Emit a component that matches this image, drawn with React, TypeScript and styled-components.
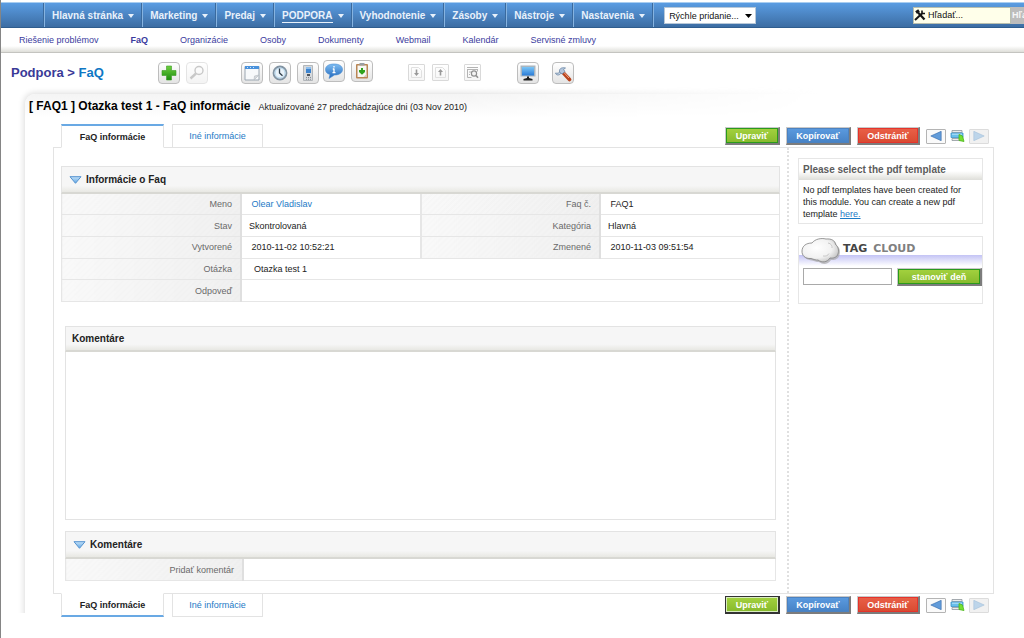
import React from 'react';
import styled, { createGlobalStyle, css } from 'styled-components';

const NB = '\u00a0';

const GlobalStyle = createGlobalStyle`
  *, *::before, *::after { box-sizing: border-box; }
  body {
    margin: 0;
    background: #fff;
    color: #222;
    font: 9px/12px "Liberation Sans", Arial, sans-serif;
  }
  button, input, select { font: inherit; margin: 0; }
  a { color: inherit; text-decoration: none; }
`;

const Page = styled.div`
  min-height: 100vh;
  padding-top: 2px;
  border-left: 1px solid #858585;
  overflow: hidden;
`;

/* ---------- main navigation ---------- */

const NavBar = styled.nav`
  display: flex;
  align-items: stretch;
  height: 26px;
  padding-left: 43px;
  border-top: 1px solid #a9cdf0;
  border-bottom: 1px solid #2f5d8e;
  background: linear-gradient(#5a9ce2, #3c6da3);
`;

const NavItem = styled.a<{ $current?: boolean }>`
  display: flex;
  align-items: center;
  gap: 5px;
  padding: 2px 8px 0 7px;
  border-left: 1px solid #86b3e0;
  box-shadow: -1px 0 #3a6a9e;
  color: #e8f1fb;
  font-size: 10px;
  font-weight: bold;
  white-space: nowrap;
  span { border-bottom: 1px solid ${p => (p.$current ? '#e8f1fb' : 'transparent')}; }
`;

const QuickAdd = styled.div`
  position: relative;
  display: flex;
  align-items: center;
  padding: 1px 0 0 10px;
  border-left: 1px solid #86b3e0;
  box-shadow: -1px 0 #3a6a9e;
  svg { position: absolute; right: 4px; pointer-events: none; }
`;

const QuickSelect = styled.select`
  appearance: none;
  width: 92px;
  height: 17px;
  padding: 0 4px;
  border: 1px solid #b8c8d8;
  border-radius: 0;
  background: #fff;
  color: #111;
`;

const SearchForm = styled.form`
  display: flex;
  align-items: center;
  width: 111px;
  margin-left: auto;
  overflow: hidden;
`;

const SearchBox = styled.label`
  display: flex;
  flex: none;
  align-items: center;
  width: 98px;
  height: 17px;
  border: 1px solid #b9bfae;
  background: #ffffea;
  input {
    width: 80px;
    padding: 0 0 0 2px;
    border: 0;
    background: none;
    color: #111;
    outline: 0;
  }
  input::placeholder { color: #111; }
`;

const SearchButton = styled.button`
  flex: none;
  height: 17px;
  padding: 0 1px;
  border: 0;
  background: #bcbcbc;
  color: #f6f6f6;
  font-weight: bold;
`;

const SubNav = styled.nav`
  display: flex;
  align-items: center;
  gap: 32px;
  height: 25px;
  padding: 0 18px 1px;
  border-bottom: 1px solid #c4c4c0;
  background: linear-gradient(#fff 18px, #deded9);
  color: #3b3b9e;
  white-space: nowrap;
`;

const SubLink = styled.a<{ $current?: boolean }>`
  font-weight: ${p => (p.$current ? 'bold' : 'normal')};
`;

/* ---------- module header ---------- */

const ModuleHeader = styled.header`
  display: flex;
  align-items: center;
  height: 39px;
  padding-left: 10px;
`;

const ModuleTitle = styled.h1`
  width: 147px;
  margin: 0;
  color: #3a3a97;
  font-size: 13px;
  line-height: 16px;
  white-space: nowrap;
  a { color: #0f77c4; }
`;

const ToolGroup = styled.div<{ $before?: number; $gap?: number; $raised?: boolean }>`
  display: flex;
  gap: ${p => p.$gap ?? 6}px;
  margin-left: ${p => p.$before ?? 0}px;
  padding-bottom: ${p => (p.$raised ? 3 : 0)}px;
`;

const ToolButton = styled.button<{ $small?: boolean; $faded?: boolean }>`
  display: grid;
  place-items: center;
  width: ${p => (p.$small ? 17 : 22)}px;
  height: ${p => (p.$small ? 17 : 22)}px;
  padding: 0;
  border: 1px solid ${p => (p.$small ? '#d9d9d9' : '#bdbdbd')};
  border-radius: ${p => (p.$small ? 1 : 4)}px;
  background: linear-gradient(#fff, ${p => (p.$small ? '#f6f6f6' : '#e4e4e4')});
  opacity: ${p => (p.$faded ? 0.4 : 1)};
`;

/* ---------- record frame ---------- */

const Frame = styled.main`
  position: relative;
  margin: 2px 30px 0 24px;
`;

const FrameGlow = styled.div`
  position: absolute;
  z-index: -1;
  inset: -8px 0 4px -8px;
  overflow: hidden;
  mask-image: linear-gradient(to right, #000 45%, transparent 82%);
  &::after {
    content: '';
    position: absolute;
    inset: 8px -20px -20px 8px;
    border-radius: 10px;
    box-shadow: -1px -1px 6px #dcdcdc;
    background: linear-gradient(#f4f4f4, #fff 24px);
  }
`;

const RecordTitle = styled.h2`
  display: flex;
  align-items: baseline;
  gap: 8px;
  margin: 0;
  padding: 4px 0 0 4px;
  color: #000;
  font-size: 12px;
  line-height: 16px;
  white-space: nowrap;
  small { color: #222; font-size: 9px; font-weight: normal; }
`;

const TabRow = styled.div<{ $bottom?: boolean }>`
  position: relative;
  display: flex;
  align-items: ${p => (p.$bottom ? 'flex-start' : 'flex-end')};
  gap: 8px;
  margin: ${p => (p.$bottom ? '-1px 0 0' : '9px 0 -1px')};
  padding: 0 5px 0 36px;
`;

const Tab = styled.a<{ $active?: boolean; $bottom?: boolean }>`
  display: grid;
  place-items: center;
  height: 24px;
  width: ${p => (p.$active ? 103 : 91)}px;
  border: 1px solid #e3e3e3;
  background: #fff;
  color: #1c7ac6;
  ${p =>
    p.$active &&
    css`
      color: #222;
      font-weight: bold;
      border-${p.$bottom ? 'bottom' : 'top'}: 2px solid #69a9e4;
      border-${p.$bottom ? 'top' : 'bottom'}-color: #fff;
    `}
`;

const Actions = styled.div`
  display: flex;
  align-items: center;
  gap: 6px;
  height: 24px;
  margin-left: auto;
`;

const tones = {
  green: ['#a4d23f', '#86b92c', '#2a9a1c'],
  blue: ['#5b9be0', '#4681c4', '#4c82c0'],
  red: ['#ea6048', '#d84a30', '#e4342c'],
};

const ActionButton = styled.button<{ $tone: keyof typeof tones; $focused?: boolean; $width: number }>`
  width: ${p => p.$width}px;
  height: 18px;
  padding: 0;
  border: 1px solid #c9c9c9;
  border-width: 1px 2px 2px 1px;
  border-right-color: #7c7c7c;
  border-bottom-color: #7c7c7c;
  box-shadow: inset 0 0 0 1px ${p => tones[p.$tone][2]};
  background: linear-gradient(${p => tones[p.$tone][0]}, ${p => tones[p.$tone][1]});
  color: #fff;
  font-weight: bold;
  line-height: 12px;
  ${p =>
    p.$focused &&
    css`
      border-color: #333;
      box-shadow: inset 0 0 0 1px #d9ecc0;
    `}
`;

const Pager = styled.div`
  display: flex;
  align-items: center;
  gap: 4px;
`;

const PagerButton = styled.button<{ $off?: boolean }>`
  display: grid;
  place-items: center;
  width: 20px;
  height: 15px;
  padding: 0;
  border: 1px solid ${p => (p.$off ? '#dcdcdc' : '#b4b4b4')};
  border-radius: 1px;
  background: ${p => (p.$off ? '#f1f1f1' : '#fafafa')};
`;

const PlainButton = styled.button`
  display: grid;
  width: 15px;
  padding: 0;
  border: 0;
  background: none;
`;

const Panel = styled.div`
  display: flex;
  margin-left: 28px;
  border: 1px solid #e3e3e3;
`;

const MainColumn = styled.div`
  flex: 1;
  min-width: 0;
  padding: 18px 7px 12px;
`;

const Inset = styled.div`
  margin: 24px 4px 0;
`;

const Sidebar = styled.aside`
  flex: none;
  width: 206px;
  padding: 10px 10px 10px 9px;
  border-left: 2px dotted #e0e0e0;
`;

/* ---------- blocks ---------- */

const BlockHead = styled.h3<{ $tall?: boolean; $indent: number }>`
  display: flex;
  align-items: center;
  gap: 4px;
  height: ${p => (p.$tall ? 28 : 26)}px;
  margin: 0;
  padding: 0 ${p => p.$indent}px;
  border: 1px solid #e3e3e3;
  border-bottom: 2px solid #d8d8d3;
  background: linear-gradient(#f6f6f6 75%, #e8e8e3);
  color: #222;
  font-size: 10px;
  line-height: 12px;
`;

const Fields = styled.table<{ $height: number }>`
  width: 100%;
  height: ${p => p.$height}px;
  border-collapse: collapse;
  table-layout: fixed;
  th, td {
    padding: 0 8px 0 7px;
    border: 1px solid #e6e6e6;
    color: #222;
    line-height: 12px;
    text-align: left;
    overflow: hidden;
  }
  th {
    border-right: 2px solid #dfdfdf;
    background:
      repeating-linear-gradient(135deg, transparent 0 2px, rgba(0, 0, 0, .008) 2px 4px),
      linear-gradient(to right, #f9f9f9, #f0f0f0);
    color: #6a6a6a;
    font-weight: normal;
    text-align: right;
  }
  tr:first-child > * { border-top: 0; }
  td + th { border-left: 2px solid #e6e6e6; }
  a { color: #1c7ac6; }
`;

const Comments = styled.div`
  min-height: 168px;
  margin-bottom: 11px;
  border: 1px solid #e3e3e3;
  border-top: 0;
`;

const CommentInput = styled.input`
  display: block;
  width: 100%;
  padding: 0;
  border: 0;
  outline: 0;
`;

/* ---------- sidebar cards ---------- */

const Card = styled.section`
  margin-bottom: 12px;
  border: 1px solid #e6e6e6;
`;

const CardHead = styled.h3`
  margin: 0;
  padding: 5px 4px 3px;
  border-bottom: 1px solid #e0e0dc;
  background: linear-gradient(#fff 60%, #e2e2dd);
  color: #5c5c5c;
  font-size: 10px;
  line-height: 12px;
`;

const CardText = styled.p`
  margin: 0;
  padding: 4px 16px 3px 4px;
  a { color: #1c7ac6; text-decoration: underline; }
`;

const CloudHead = styled.div`
  display: flex;
  gap: 2px;
  height: 29px;
  padding-left: 2px;
  background: linear-gradient(#fff 18px, #c3c3f5 18px, #fff);
  h3 {
    display: flex;
    gap: 6px;
    margin: 0;
    padding-top: 5px;
    color: #444;
    font: bold 11px/13px "DejaVu Sans", sans-serif;
  }
  span { color: #808080; }
`;

const TagForm = styled.form`
  display: flex;
  gap: 5px;
  padding: 2px 0 17px 4px;
  input {
    flex: 1;
    min-width: 0;
    height: 17px;
    border: 1px solid #a9a9a9;
    outline: 0;
  }
`;

/* ---------- drawings ---------- */

const Caret = () => (
  <svg width="6" height="4" viewBox="0 0 6 4" aria-hidden="true"><path d="M0 0h6L3 4z" fill="#e8f1fb" /></svg>
);

const SelectCaret = () => (
  <svg width="7" height="4" viewBox="0 0 7 4" aria-hidden="true"><path d="M0 0h7L3.500 4z" fill="#000" /></svg>
);

const Tools = () => (
  <svg width="12" height="13" viewBox="0 0 12 13" fill="none" stroke="#151515" aria-hidden="true">
    <path d="M2 3.500L5 1.500" strokeWidth="3" />
    <path d="M4 3.500L10.500 10.500" strokeWidth="2.200" />
    <path d="M1 11L8 4.500" strokeWidth="2" />
    <path d="M8 1.500v3h3" strokeWidth="1.600" />
  </svg>
);

const Collapse = () => (
  <svg width="13" height="8" viewBox="0 0 13 8" aria-hidden="true">
    <defs>
      <linearGradient id="fold" x2="0" y2="1"><stop stopColor="#c4e2f8" /><stop offset="1" stopColor="#5fa5e4" /></linearGradient>
    </defs>
    <path d="M1 .7h11L6.500 7.300z" fill="url(#fold)" stroke="#5492cf" strokeLinejoin="round" />
  </svg>
);

const PlusIcon = () => (
  <svg width="18" height="18" viewBox="0 0 18 18" aria-hidden="true">
    <defs><linearGradient id="plus" x2="0" y2="1"><stop stopColor="#6fd03f" /><stop offset="1" stopColor="#1c8c10" /></linearGradient></defs>
    <path d="M6.500 2h5v4.500H16v5h-4.500V16h-5v-4.500H2v-5h4.500z" fill="url(#plus)" stroke="#3c9c25" strokeWidth=".6" />
  </svg>
);

const LensIcon = () => (
  <svg width="18" height="18" viewBox="0 0 18 18" fill="none" stroke="#777" aria-hidden="true">
    <circle cx="11" cy="6.500" r="4" strokeWidth="1.400" /><path d="M8 9.500L2.500 14.500" strokeWidth="2.400" />
  </svg>
);

const CalendarIcon = () => (
  <svg width="18" height="18" viewBox="0 0 18 18" aria-hidden="true">
    <path d="M2 2.500h14v13.500H2z" fill="#f7f9fb" stroke="#9aa5b0" />
    <path d="M2 2h14v3H2z" fill="#4a92dc" /><path d="M4 3.500h1M7 3.500h1M10 3.500h1" stroke="#cfe4f8" />
    <path d="M16 11l-4.500 1-.5 4z" fill="#d5d9de" stroke="#b4bac0" strokeWidth=".6" />
  </svg>
);

const ClockIcon = () => (
  <svg width="18" height="18" viewBox="0 0 18 18" aria-hidden="true">
    <circle cx="9" cy="9" r="6.500" fill="#e9f3fa" stroke="#8193a2" strokeWidth="1.800" />
    <circle cx="9" cy="9" r="5" fill="none" stroke="#b3d5ec" />
    <path d="M8.500 4.500V9l3 2.800" fill="none" stroke="#2f3e4a" strokeWidth="1.300" />
  </svg>
);

const DeviceIcon = () => (
  <svg width="18" height="18" viewBox="0 0 18 18" aria-hidden="true">
    <path d="M4.500 1.500h9v15h-9z" fill="#d6d9dc" stroke="#b2b6ba" />
    <path d="M7 3h5v6H7z" fill="#3d84cf" /><path d="M7 3h5v2H7z" fill="#8ebfee" />
    <path d="M8 10h3v2H8z" fill="#50555b" /><path d="M7 13.500h1M9 13.500h1M11 13.500h1M7 15.300h1M9 15.300h1M11 15.300h1" stroke="#8b9096" />
  </svg>
);

const ChatIcon = () => (
  <svg width="20" height="18" viewBox="0 0 20 18" aria-hidden="true">
    <defs><linearGradient id="chat" x2="0" y2="1"><stop stopColor="#7fbdf2" /><stop offset="1" stopColor="#2067bb" /></linearGradient></defs>
    <path d="M10 2c5 0 8.500 2 8.500 5.500S15 13 10.500 13L5 16.500l1-4C3 11.700 1.500 10 1.500 7.500 1.500 4 5 2 10 2z" fill="url(#chat)" stroke="#4a8cd0" strokeWidth=".6" />
    <path d="M10 4v1.500M10 6.500V11M8.800 7H10M8.500 10.700h3" stroke="#fff" strokeWidth="1.300" />
  </svg>
);

const ClipboardIcon = () => (
  <svg width="18" height="18" viewBox="0 0 18 18" aria-hidden="true">
    <rect x="3" y="2" width="12" height="14.500" rx="1" fill="#b98655" />
    <path d="M4.500 3.500h9v11.500h-9z" fill="#f7f7f3" /><path d="M6.500 1h5v2.500h-5z" fill="#9b9fa3" />
    <path d="M8 6h2v2h2v2l-3 2.800L6 10V8h2z" fill="#2fa31e" /><path d="M13.500 12l-3 3h3z" fill="#d3cec4" />
  </svg>
);

const TransferIcon = ({ up }: { up?: boolean }) => (
  <svg width="13" height="13" viewBox="0 0 13 13" fill="none" stroke="#e0e0e0" aria-hidden="true">
    <path d="M1.500 1.500h7l3 3v7h-10z" />
    <path d={up ? 'M6.500 3L9 6H7.300v3.500H5.700V6H4z' : 'M6.500 10L9 7H7.300V3.500H5.700V7H4z'} fill="#999" stroke="none" />
  </svg>
);

const FindIcon = () => (
  <svg width="15" height="15" viewBox="0 0 15 15" fill="none" stroke="#b4b4b4" aria-hidden="true">
    <path d="M2 2.500h11M2 4.500h11" /><path d="M2.500 4.500v8h4M12.500 4.500v2" />
    <path d="M4 7h2M4 9.500h1" /><circle cx="9" cy="8.500" r="2.600" fill="#f4f4f4" stroke="#909090" strokeWidth="1.200" /><path d="M11 10.500l2 2.300" stroke="#909090" strokeWidth="1.600" />
  </svg>
);

const MonitorIcon = () => (
  <svg width="18" height="18" viewBox="0 0 18 18" aria-hidden="true">
    <defs><linearGradient id="screen" x2="0" y2="1"><stop stopColor="#7cc6f7" /><stop offset="1" stopColor="#2a7bd6" /></linearGradient></defs>
    <path d="M1.500 1.500h15v11h-15z" fill="#aab6c0" /><path d="M3 3h12v8.500H3z" fill="url(#screen)" />
    <path d="M8 12.500h2v1.500l3.500 1v1.500h-9V15L8 14z" fill="#1e1e1e" />
  </svg>
);

const HammerIcon = () => (
  <svg width="18" height="18" viewBox="0 0 18 18" fill="none" aria-hidden="true">
    <path d="M8.500 8l7 7.500" stroke="#b8431c" strokeWidth="3.600" strokeLinecap="round" />
    <path d="M9.500 8l5.500 6" stroke="#f0a184" strokeWidth="1" />
    <path d="M6.500 7.500C4.500 9.500 3.500 9.500 1.500 9c.5 2.500 4 3 6-.5" fill="#c5d3e4" stroke="#6b86a6" strokeWidth=".8" />
    <path d="M5.500 8C5 5 7 3 11.500 4L9.500 5.500 11 7.500 8 10z" fill="#b4c6dc" stroke="#6b86a6" strokeWidth=".8" />
  </svg>
);

const Arrow = ({ right }: { right?: boolean }) => (
  <svg width="12" height="10" viewBox="0 0 12 10" aria-hidden="true">
    {right
      ? <path d="M.8.300L11.200 5 .8 9.700z" fill="#bdd5ea" stroke="#a5c1da" strokeWidth=".6" />
      : <path d="M11.200.300L.8 5l10.400 4.700z" fill="#629cda" stroke="#3468a8" strokeWidth=".6" />}
  </svg>
);

const JumpIcon = () => (
  <svg width="15" height="14" viewBox="0 0 15 14" aria-hidden="true">
    <path d="M2 1.500h10v2H2zM2 9.500h10v2H2z" fill="#ececec" stroke="#8f979d" strokeWidth=".8" />
    <path d="M1 4h12v4.500H1z" fill="#69bfec" stroke="#3b93c8" strokeWidth=".8" /><path d="M2 5.200h10" stroke="#b8e4fa" />
    <path d="M9 5.500l3.500 1.500 1.500 5.500-5-1z" fill="#76e032" stroke="#4ab51b" strokeWidth=".8" />
  </svg>
);

const CloudIcon = () => (
  <svg width="40" height="28" viewBox="0 0 40 28" aria-hidden="true">
    <defs>
      <radialGradient id="puff" cx=".4" cy=".4" r=".7"><stop stopColor="#fff" /><stop offset=".6" stopColor="#f2f2f2" /><stop offset="1" stopColor="#bdbdbd" /></radialGradient>
    </defs>
    <path d="M10 22.500C4 22 .8 18.500 1 13.500 1.200 9 5 6 11 5.500 14 2 20 .8 25 2c5.500-.5 9 1.500 10 5.500 3 2.500 3.500 6 2.500 9.500-1 4-5 5.500-8.500 5-3 4.500-8 5-12 2-2 .2-4-.5-7-1.500z" fill="#aaa" opacity=".7" transform="translate(1 1)" />
    <path d="M10 21.500C4 22 .8 18.500 1 14 1.200 9 5 6 11 6 14 2 20 .8 25 2c5.500-.5 9 1.500 9.500 5.500 3 2.500 3.500 6 2.500 9.500-1 3.500-5 4.500-8 4-3 4.500-8 5-12 2-2 .2-4-.5-7-1.500z" fill="url(#puff)" stroke="#808080" strokeWidth=".8" />
    <path d="M27 6c3 .5 4.500 2.500 4 5M22 19c3 .5 5-.5 6-2.500" fill="none" stroke="#c8c8c8" />
  </svg>
);

/* ---------- composition ---------- */

const modules = ['Hlavná stránka', 'Marketing', 'Predaj', 'PODPORA', 'Vyhodnotenie', 'Zásoby', 'Nástroje', 'Nastavenia'];
const sections = ['Riešenie problémov', 'FaQ', 'Organizácie', 'Osoby', 'Dokumenty', 'Webmail', 'Kalendár', 'Servisné zmluvy'];

function RecordBar({ bottom }: { bottom?: boolean }) {
  return (
    <TabRow $bottom={bottom}>
      <Tab href="#info" $active $bottom={bottom}>FaQ informácie</Tab>
      <Tab href="#more" $bottom={bottom}>Iné informácie</Tab>
      <Actions>
        <ActionButton type="button" $tone="green" $width={55} $focused={bottom}>Upraviť</ActionButton>
        <ActionButton type="button" $tone="blue" $width={65}>Kopírovať</ActionButton>
        <ActionButton type="button" $tone="red" $width={63}>Odstrániť</ActionButton>
        <Pager>
          <PagerButton type="button" aria-label="Predchádzajúci"><Arrow /></PagerButton>
          <PlainButton type="button" aria-label="Prejsť na"><JumpIcon /></PlainButton>
          <PagerButton type="button" aria-label="Nasledujúci" $off><Arrow right /></PagerButton>
        </Pager>
      </Actions>
    </TabRow>
  );
}

export default function App() {
  return (
    <Page>
      <GlobalStyle />
      <NavBar>
        {modules.map(name => (
          <NavItem key={name} href="#" $current={name === 'PODPORA'}><span>{name}</span><Caret /></NavItem>
        ))}
        <QuickAdd>
          <QuickSelect aria-label="Rýchle pridanie"><option>Rýchle pridanie...</option></QuickSelect>
          <SelectCaret />
        </QuickAdd>
        <SearchForm>
          <SearchBox><Tools /><input placeholder="Hľadať..." aria-label="Hľadať" /></SearchBox>
          <SearchButton type="button">Hľadať</SearchButton>
        </SearchForm>
      </NavBar>
      <SubNav>
        {sections.map(name => (
          <SubLink key={name} href="#" $current={name === 'FaQ'}>{name}</SubLink>
        ))}
      </SubNav>

      <ModuleHeader>
        <ModuleTitle>Podpora &gt; <a href="#">FaQ</a></ModuleTitle>
        <ToolGroup>
          <ToolButton type="button" aria-label="Pridať"><PlusIcon /></ToolButton>
          <ToolButton type="button" aria-label="Vyhľadať" $faded><LensIcon /></ToolButton>
        </ToolGroup>
        <ToolGroup $before={33}>
          <ToolButton type="button" aria-label="Kalendár"><CalendarIcon /></ToolButton>
          <ToolButton type="button" aria-label="Hodiny"><ClockIcon /></ToolButton>
          <ToolButton type="button" aria-label="Kalkulačka"><DeviceIcon /></ToolButton>
        </ToolGroup>
        <ToolGroup $before={4} $raised>
          <ToolButton type="button" aria-label="Chat"><ChatIcon /></ToolButton>
          <ToolButton type="button" aria-label="Posledné"><ClipboardIcon /></ToolButton>
        </ToolGroup>
        <ToolGroup $before={35} $gap={7}>
          <ToolButton type="button" aria-label="Import" $small><TransferIcon /></ToolButton>
          <ToolButton type="button" aria-label="Export" $small><TransferIcon up /></ToolButton>
        </ToolGroup>
        <ToolGroup $before={15}>
          <ToolButton type="button" aria-label="Duplicity" $small><FindIcon /></ToolButton>
        </ToolGroup>
        <ToolGroup $before={36} $gap={13}>
          <ToolButton type="button" aria-label="Monitor"><MonitorIcon /></ToolButton>
          <ToolButton type="button" aria-label="Nastavenia"><HammerIcon /></ToolButton>
        </ToolGroup>
      </ModuleHeader>

      <Frame>
        <FrameGlow />
        <RecordTitle>
          [ FAQ1 ] Otazka test 1 - FaQ informácie
          <small>Aktualizované 27 predchádzajúce dni (03 Nov 2010)</small>
        </RecordTitle>
        <RecordBar />
        <Panel>
          <MainColumn>
            <BlockHead $tall $indent={7}><Collapse />Informácie o Faq</BlockHead>
            <Fields $height={108}>
              <tbody>
                <tr>
                  <th scope="row">Meno</th><td>{NB}<a href="#">Olear Vladislav</a></td>
                  <th scope="row">Faq č.</th><td>{NB}FAQ1</td>
                </tr>
                <tr>
                  <th scope="row">Stav</th><td>Skontrolovaná</td>
                  <th scope="row">Kategória</th><td>Hlavná</td>
                </tr>
                <tr>
                  <th scope="row">Vytvorené</th><td>{NB}2010-11-02 10:52:21</td>
                  <th scope="row">Zmenené</th><td>{NB}2010-11-03 09:51:54</td>
                </tr>
                <tr><th scope="row">Otázka</th><td colSpan={3}>{NB}{NB}Otazka test 1</td></tr>
                <tr><th scope="row">Odpoveď</th><td colSpan={3} /></tr>
              </tbody>
            </Fields>
            <Inset>
              <BlockHead $indent={6}>Komentáre</BlockHead>
              <Comments />
              <BlockHead $tall $indent={7}><Collapse />Komentáre</BlockHead>
              <Fields $height={22}>
                <tbody>
                  <tr>
                    <th scope="row"><label htmlFor="comment">Pridať komentár</label></th>
                    <td colSpan={3}><CommentInput id="comment" /></td>
                  </tr>
                </tbody>
              </Fields>
            </Inset>
          </MainColumn>
          <Sidebar>
            <Card>
              <CardHead>Please select the pdf template</CardHead>
              <CardText>No pdf templates have been created for this module. You can create a new pdf template <a href="#">here.</a></CardText>
            </Card>
            <Card>
              <CloudHead><CloudIcon /><h3>TAG <span>CLOUD</span></h3></CloudHead>
              <TagForm>
                <input aria-label="Tag" />
                <ActionButton type="button" $tone="green" $width={85}>stanoviť deň</ActionButton>
              </TagForm>
            </Card>
          </Sidebar>
        </Panel>
        <RecordBar bottom />
      </Frame>
    </Page>
  );
}
